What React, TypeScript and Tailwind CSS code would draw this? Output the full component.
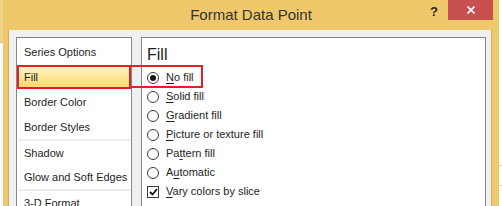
import React from "react";

const font = { fontFamily: '"Liberation Sans", Arial, sans-serif' };

function ListItem({ label, h = "h-[25px]" }: { label: string; h?: string }) {
  return (
    <div className={`${h} flex items-center pl-[7px] text-[11px] text-[#1e1e24]`}>{label}</div>
  );
}

function Radio({ checked, children }: { checked?: boolean; children: React.ReactNode }) {
  return (
    <div className="h-[19px] flex items-center">
      <div className="w-[12px] h-[12px] rounded-full border border-[#3a3a3a] bg-white flex items-center justify-center">
        {checked && <div className="w-[6px] h-[6px] rounded-full bg-[#161616]" />}
      </div>
      <span className="ml-[7px] text-[11px] text-[#1e1e24]">{children}</span>
    </div>
  );
}

export default function App() {
  return (
    <div className="relative w-[502px] h-[206px] overflow-hidden flex bg-white" style={font}>
      {/* sheet behind the dialog */}
      <div className="w-[3px] h-full shrink-0 bg-white flex flex-col">
        <div className="h-[42px] bg-[#f3d48c]" />
        <div className="h-px bg-[#b8b8b8]" />
      </div>

      {/* dialog */}
      <div className="w-[496px] h-full shrink-0 bg-[#f0c86c] flex flex-col">
        <div className="relative h-[30px] shrink-0 flex justify-center pt-[6px]">
          <span className="text-[15px] leading-[18px] text-[#333333]">Format Data Point</span>
          <span className="absolute right-[61px] top-[2px] text-[13px] font-bold text-[#262626]">?</span>
          <div className="absolute right-[6px] top-0 w-[45px] h-[20px] bg-[#c75050] flex items-center justify-center">
            <svg width="8" height="8" viewBox="0 0 8 8">
              <path d="M0.5 0.5 L7.5 7.5 M7.5 0.5 L0.5 7.5" stroke="#fff" strokeWidth="1.6" />
            </svg>
          </div>
        </div>

        <div className="flex-1 flex pl-[5px] pr-[7px]">
          <div className="flex-1 flex bg-[#f0f0f0] border-x border-[#d2ac55] pl-[7px] pt-[7px] pr-[5px] gap-[9px]">
            {/* category list */}
            <div className="w-[116px] h-[200px] shrink-0 bg-white border border-[#828790] pt-[2px]">
              <ListItem label="Series Options" />
              <div className="h-[24px] mb-px flex items-center pl-[7px] text-[11px] text-[#1e1e24] bg-linear-to-b from-[#fef4c8] to-[#fcd865]">
                Fill
              </div>
              <ListItem label="Border Color" />
              <ListItem label="Border Styles" h="h-[24px]" />
              <div className="mx-px h-[2px] bg-[#ebebf0]" />
              <ListItem label="Shadow" h="h-[24px]" />
              <ListItem label="Glow and Soft Edges" h="h-[24px]" />
              <div className="mx-px h-[2px] bg-[#ebebf0]" />
              <ListItem label="3-D Format" h="h-[24px]" />
            </div>

            {/* fill options */}
            <div className="flex-1 h-[200px] bg-white border border-[#828790] pl-[5px] pt-[6px]">
              <div className="text-[16px] leading-[21px] text-[#222222] mb-[3px]">Fill</div>
              <Radio checked>
                <u className="underline-offset-2">N</u>o fill
              </Radio>
              <Radio>
                <u className="underline-offset-2">S</u>olid fill
              </Radio>
              <Radio>
                <u className="underline-offset-2">G</u>radient fill
              </Radio>
              <Radio>
                <u className="underline-offset-2">P</u>icture or texture fill
              </Radio>
              <Radio>
                Pa<u className="underline-offset-2">t</u>tern fill
              </Radio>
              <Radio>
                A<u className="underline-offset-2">u</u>tomatic
              </Radio>
              <div className="h-[19px] flex items-center">
                <div className="w-[12px] h-[12px] border border-[#3a3a3a] bg-white flex items-center justify-center">
                  <svg width="9" height="8" viewBox="0 0 9 8">
                    <path d="M1 4 L3.5 6.5 L8 1" fill="none" stroke="#111" strokeWidth="1.8" />
                  </svg>
                </div>
                <span className="ml-[7px] text-[11px] text-[#1e1e24]">
                  <u className="underline-offset-2">V</u>ary colors by slice
                </span>
              </div>
            </div>
          </div>
        </div>
      </div>

      <div className="w-[3px] h-full shrink-0 bg-white flex flex-col">
        <div className="h-[165px]" />
        <div className="h-px bg-[#cfcfcf]" />
        <div className="h-[19px]" />
        <div className="h-px bg-[#cfcfcf]" />
      </div>

      {/* red annotation boxes */}
      <div className="absolute left-[17px] top-[65px] w-[114px] h-[24px] border-2 border-[#e3202a]" />
      <div className="absolute left-[129px] top-[65px] w-[74px] h-[23px] border-2 border-[#e3202a]" />
    </div>
  );
}
